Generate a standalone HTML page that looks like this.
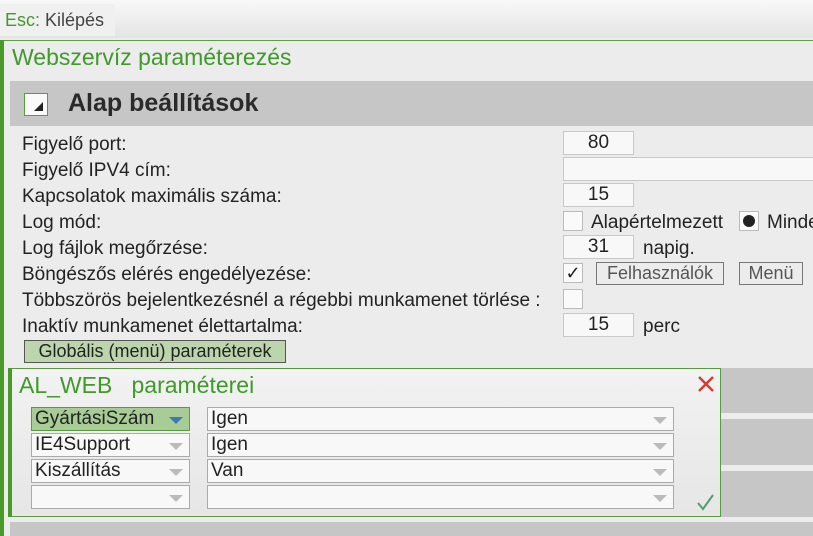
<!DOCTYPE html>
<html><head><meta charset="utf-8"><style>
*{margin:0;padding:0;box-sizing:border-box}
body{width:813px;height:536px;overflow:hidden;background:#ececec;font-family:"Liberation Sans",Arial,sans-serif;color:#222;position:relative}
.a{position:absolute;white-space:nowrap}
.lbl{font-size:19px;left:22px;line-height:20px}
.in{position:absolute;background:#f8f8f8;border:1px solid #c8c8c8;height:24px;font-size:19px;text-align:center;line-height:22px}
.cb{position:absolute;width:20px;height:20px;background:#fafafa;border:1px solid #bbb}
.btn{position:absolute;border:1px solid #777;height:23px;font-size:18px;color:#555;line-height:21px;text-align:center;background:#ececec}
.sel{position:absolute;background:#f8f8f8;border:1px solid #aaa;height:24px;font-size:19px;line-height:22px;padding-left:3px}
.arr{position:absolute;right:6px;top:9px;width:0;height:0;border-left:7px solid transparent;border-right:7px solid transparent;border-top:7px solid #bbb}
</style></head><body>
<div class="a" style="left:0;top:0;width:813px;height:38px;background:linear-gradient(#f8f8f8,#e4e4e4)"></div>
<div class="a" style="left:0;top:4px;width:115px;height:32px;background:#f0f0f0;font-size:18px;line-height:32px;padding-left:5px"><span style="color:#3f9a2a">Esc:</span><span style="color:#444"> Kilépés</span></div>
<div class="a" style="left:0;top:40px;width:813px;height:1px;background:#5aa040"></div>
<div class="a" style="left:0;top:40px;width:4px;height:496px;background:#4a9a2a"></div>
<div class="a" style="left:12px;top:44px;font-size:23px;color:#3f9a2a">Webszervíz paraméterezés</div>
<div class="a" style="left:10px;top:81px;width:803px;height:45px;background:#c6c6c6"></div>
<div class="a" style="left:24px;top:93px;width:24px;height:23px;background:#fafafa;border:1px solid #5a9a40"></div>
<div class="a" style="left:34px;top:102px;width:0;height:0;border-left:9px solid transparent;border-bottom:9px solid #222"></div>
<div class="a" style="left:68px;top:89px;font-size:25px;font-weight:bold;color:#2a2a2a">Alap beállítások</div>

<div class="a lbl" style="top:135px">Figyelő port:</div>
<div class="a lbl" style="top:161px">Figyelő IPV4 cím:</div>
<div class="a lbl" style="top:187px">Kapcsolatok maximális száma:</div>
<div class="a lbl" style="top:213px">Log mód:</div>
<div class="a lbl" style="top:239px">Log fájlok megőrzése:</div>
<div class="a lbl" style="top:265px">Böngészős elérés engedélyezése:</div>
<div class="a lbl" style="top:291px">Többszörös bejelentkezésnél a régebbi munkamenet törlése :</div>
<div class="a lbl" style="top:317px">Inaktív munkamenet élettartalma:</div>

<div class="in" style="left:563px;top:131px;width:71px">80</div>
<div class="in" style="left:563px;top:157px;width:260px"></div>
<div class="in" style="left:563px;top:183px;width:71px">15</div>
<div class="cb" style="left:563px;top:211px"></div>
<div class="a" style="left:591px;top:212px;font-size:19px">Alapértelmezett</div>
<div class="cb" style="left:739px;top:211px"></div>
<div class="a" style="left:743px;top:215px;width:12px;height:12px;border-radius:50%;background:#222"></div>
<div class="a" style="left:767px;top:212px;font-size:19px">Minden</div>
<div class="in" style="left:563px;top:235px;width:71px">31</div>
<div class="a" style="left:643px;top:238px;font-size:19px">napig.</div>
<div class="cb" style="left:563px;top:263px;font-size:18px;line-height:18px;text-align:center">✓</div>
<div class="btn" style="left:596px;top:262px;width:128px">Felhasználók</div>
<div class="btn" style="left:739px;top:262px;width:64px">Menü</div>
<div class="cb" style="left:563px;top:289px"></div>
<div class="in" style="left:563px;top:313px;width:71px">15</div>
<div class="a" style="left:643px;top:316px;font-size:19px">perc</div>
<div class="a" style="left:24px;top:340px;width:262px;height:23px;background:#bcd5ac;border:1px solid #555;font-size:18px;line-height:21px;text-align:center">Globális (menü) paraméterek</div>

<div class="a" style="left:720px;top:368px;width:93px;height:45px;background:#c6c6c6"></div>
<div class="a" style="left:720px;top:419px;width:93px;height:46px;background:#c6c6c6"></div>
<div class="a" style="left:720px;top:471px;width:93px;height:46px;background:#c6c6c6"></div>
<div class="a" style="left:10px;top:522px;width:803px;height:14px;background:#c6c6c6"></div>

<div class="a" style="left:8px;top:368px;width:713px;height:149px;background:linear-gradient(#f2f2f2,#e6e6e6);border:1px solid #5a9a40;border-left:4px solid #4a9a2a"></div>
<div class="a" style="left:19px;top:372px;font-size:23px;color:#3f9a2a">AL_WEB&nbsp;&nbsp;&nbsp;paraméterei</div>
<div class="a" style="left:694px;top:372px;width:24px;height:24px"><svg width="24" height="24"><path d="M5 5L19 19M19 5L5 19" stroke="#d04030" stroke-width="2.5"/></svg></div>
<div class="a" style="left:694px;top:489px;width:24px;height:24px"><svg width="24" height="24"><path d="M4 14L9 20L19 6" stroke="#4aa070" stroke-width="2" fill="none"/></svg></div>

<div class="sel" style="left:31px;top:407px;width:159px;background:#a8cc96;border-color:#5a9a40">GyártásiSzám<div class="arr" style="border-top-color:#3a7ab8"></div></div>
<div class="sel" style="left:31px;top:433px;width:159px">IE4Support<div class="arr"></div></div>
<div class="sel" style="left:31px;top:459px;width:159px">Kiszállítás<div class="arr"></div></div>
<div class="sel" style="left:31px;top:485px;width:159px"><div class="arr"></div></div>
<div class="sel" style="left:207px;top:407px;width:467px">Igen<div class="arr"></div></div>
<div class="sel" style="left:207px;top:433px;width:467px">Igen<div class="arr"></div></div>
<div class="sel" style="left:207px;top:459px;width:467px">Van<div class="arr"></div></div>
<div class="sel" style="left:207px;top:485px;width:467px"><div class="arr"></div></div>
</body></html>
